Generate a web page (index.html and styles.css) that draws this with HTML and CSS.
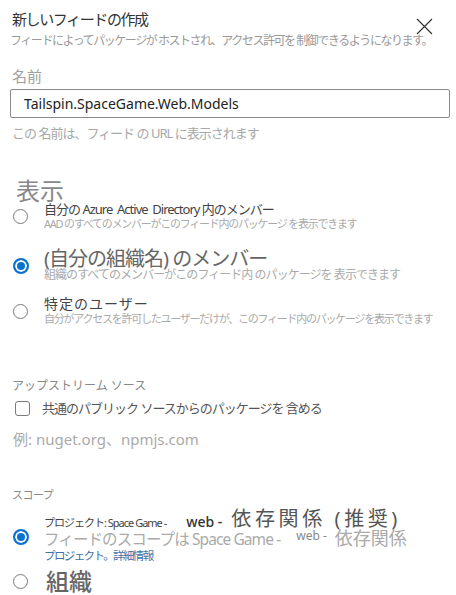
FILE: index.html
```html
<!DOCTYPE html>
<html lang="ja">
<head>
    <meta charset="UTF-8">
    <title>新しいフィードの作成</title>
    <link rel="stylesheet" href="styles.css">
</head>
<body>
    <div class="panel">
        <div class="header">
            <div class="header-text">
                <h2 class="title">新しいフィードの作成</h2>
                <p class="subtitle">フィードによってパッケージが ホストされ、アクセス許可を 制御できるようになります。</p>
            </div>
            <button class="close" aria-label="閉じる">
                <svg width="17" height="17" viewBox="0 0 17 17"><path d="M1 1L16 16M16 1L1 16" stroke="#333" stroke-width="1.2" fill="none"/></svg>
            </button>
        </div>

        <label class="field-label" for="name">名前</label>
        <input class="text-input" id="name" type="text" value="Tailspin.SpaceGame.Web.Models">
        <p class="helper">この 名前は、フィード の URL に表示されます</p>

        <h3 class="section-big">表示</h3>

        <div class="option opt-1">
            <span class="radio"></span>
            <div class="option-text">
                <div class="opt-label">自分の Azure&nbsp; Active&nbsp; Directory 内のメンバー</div>
                <div class="opt-desc">AAD のすべてのメンバーがこのフィード内のパッケージ を表示できます</div>
            </div>
        </div>

        <div class="option opt-2">
            <span class="radio checked"></span>
            <div class="option-text">
                <div class="opt-label big">(自分の組織名) のメンバー</div>
                <div class="opt-desc wide">組織のすべてのメンバーがこのフィード内 のパッケージを 表示できます</div>
            </div>
        </div>

        <div class="option opt-3">
            <span class="radio"></span>
            <div class="option-text">
                <div class="opt-label">特定のユーザー</div>
                <div class="opt-desc">自分がアクセスを許可したユーザーだけが、このフィード内のパッケージを表示できます</div>
            </div>
        </div>

        <h4 class="section-small upstream">アップストリーム ソース</h4>
        <div class="check-row">
            <span class="checkbox"></span>
            <span class="check-label">共通のパブリック ソースからのパッケージを 含める</span>
        </div>
        <p class="example">例: nuget.org、npmjs.com</p>

        <h4 class="section-small scope">スコープ</h4>
        <div class="option opt-4">
            <span class="radio checked"></span>
            <div class="option-text">
                <div class="scope-line1"><span class="s-small">プロジェクト: Space Game -</span><span class="s-web">web -</span><span class="s-big">依存関係 (推奨)</span></div>
                <div class="scope-line2"><span>フィードのスコープは Space Game -</span><span class="s-web2">web -</span><span class="s-dep">依存関係</span></div>
                <a class="scope-link" href="#">プロジェクト。詳細情報</a>
            </div>
        </div>

        <div class="option opt-5">
            <span class="radio"></span>
            <div class="option-text">
                <div class="org-label">組織</div>
            </div>
        </div>
    </div>
</body>
</html>
```

FILE: styles.css
```css
body {
    margin: 0;
    background: #fff;
    font-family: "Noto Sans", "Noto Sans CJK JP", sans-serif;
    color: #333;
}

.panel {
    width: 456px;
    padding: 0 6px 0 10px;
    box-sizing: border-box;
}

.header {
    display: flex;
    justify-content: space-between;
    align-items: flex-start;
}

.header-text {
    flex: 1;
    min-width: 0;
}

.title {
    margin: 8px 0 0 2px;
    font-size: 15px;
    line-height: 22px;
    font-weight: normal;
    letter-spacing: -1.4px;
    color: #333;
}

.subtitle {
    margin: 3px 0 0;
    font-size: 12px;
    line-height: 16px;
    letter-spacing: -1.45px;
    color: #999;
    white-space: nowrap;
}

.close {
    flex: none;
    margin: 18px 17px 0 0;
    padding: 0;
    border: none;
    background: none;
    line-height: 0;
}

.field-label {
    display: block;
    margin: 17px 0 0 2px;
    font-size: 15px;
    line-height: 20px;
    color: #a0a0a0;
}

.text-input {
    display: block;
    box-sizing: border-box;
    width: 440px;
    height: 29px;
    margin-top: 3px;
    padding: 0 13px;
    border: 1px solid #8a8a8a;
    border-radius: 2px;
    font-family: "Noto Sans", sans-serif;
    font-size: 14px;
    color: #222;
}

.helper {
    margin: 6px 0 0 2px;
    font-size: 13px;
    line-height: 18px;
    letter-spacing: -1px;
    color: #a8a8a8;
}

.section-big {
    margin: 33px 0 0 6px;
    font-size: 24px;
    line-height: 32px;
    font-weight: normal;
    color: #888;
}

.option {
    display: flex;
    align-items: center;
}

.radio {
    flex: none;
    width: 15px;
    height: 15px;
    margin: 0 16px 0 3px;
    box-sizing: border-box;
    border: 1.5px solid #7a7a7a;
    border-radius: 50%;
}

.radio.checked {
    border: 2px solid #0a72d0;
    background: #0a72d0;
    box-shadow: inset 0 0 0 2px #fff;
    width: 16px;
    height: 16px;
    margin-left: 3px;
    margin-right: 15px;
}

.opt-label {
    font-size: 13px;
    line-height: 16px;
    color: #444;
    white-space: nowrap;
}

.opt-desc {
    font-size: 11px;
    line-height: 14px;
    letter-spacing: -1.25px;
    color: #aaa;
    white-space: nowrap;
}

.opt-1 {
    margin-top: -6px;
}

.opt-1 .opt-label {
    letter-spacing: -1px;
}

.opt-2 {
    margin-top: 19px;
}

.opt-2 .opt-label.big {
    font-size: 20px;
    line-height: 18px;
    letter-spacing: -1px;
    color: #666;
}

.opt-2 .opt-desc.wide {
    font-size: 12px;
    letter-spacing: -0.95px;
}

.opt-3 {
    margin-top: 14px;
}

.opt-3 .opt-label {
    font-size: 14px;
    letter-spacing: 1px;
}

.section-small {
    margin: 0 0 0 2px;
    font-size: 11px;
    line-height: 16px;
    font-weight: normal;
    letter-spacing: -0.5px;
    color: #888;
}

.upstream {
    margin-top: 52px;
    font-size: 12px;
    letter-spacing: 0;
}

.check-row {
    display: flex;
    align-items: center;
    margin-top: 6px;
}

.checkbox {
    flex: none;
    width: 15px;
    height: 15px;
    margin: 0 12px 0 5px;
    box-sizing: border-box;
    border: 1.5px solid #7a7a7a;
    border-radius: 3px;
}

.check-label {
    font-size: 13px;
    line-height: 16px;
    letter-spacing: -1px;
    color: #555;
}

.example {
    margin: 13px 0 0 3px;
    font-size: 15px;
    line-height: 20px;
    letter-spacing: 0;
    color: #aaa;
}

.scope {
    margin-top: 38px;
}

.opt-4 {
    margin-top: 8px;
}

.scope-line1 {
    display: flex;
    align-items: flex-end;
    height: 19px;
    white-space: nowrap;
}

.s-small {
    font-size: 11px;
    line-height: 14px;
    color: #444;
    letter-spacing: -1px;
}

.s-web {
    margin-left: 20px;
    font-size: 14px;
    line-height: 16px;
    font-weight: 500;
    color: #333;
}

.s-big {
    margin-left: 9px;
    font-size: 20px;
    line-height: 22px;
    letter-spacing: 3.6px;
    color: #555;
}

.scope-line2 {
    display: flex;
    align-items: baseline;
    white-space: nowrap;
    font-size: 15.5px;
    line-height: 17px;
    color: #aaa;
    letter-spacing: -0.9px;
}

.s-web2 {
    margin: 0 8px 0 16px;
    font-size: 12px;
    letter-spacing: 0;
    color: #888;
    position: relative;
    top: -5px;
}

.s-dep {
    font-size: 18px;
    letter-spacing: 0;
}

.scope-link {
    display: block;
    font-size: 11.5px;
    line-height: 14px;
    color: #3e72a8;
    text-decoration: none;
    letter-spacing: -1.6px;
}

.opt-5 {
    margin-top: 5px;
}

.org-label {
    margin-left: 2px;
    font-size: 23px;
    line-height: 26px;
    font-weight: 500;
    color: #666;
}
```
